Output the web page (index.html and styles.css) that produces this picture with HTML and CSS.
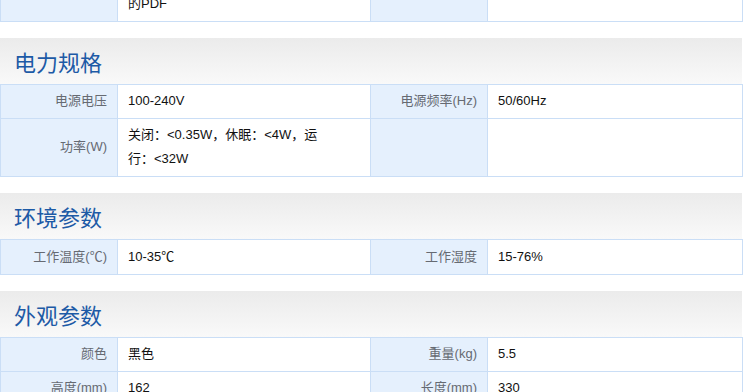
FILE: index.html
```html
<!DOCTYPE html>
<html lang="zh-CN">
<head>
<meta charset="utf-8">
<link rel="stylesheet" href="styles.css">
</head>
<body>
<div class="page">
  <table class="spec first">
    <colgroup><col class="c1"><col class="c2"><col class="c3"><col class="c4"></colgroup>
    <tr class="two">
      <td class="lbl"></td>
      <td class="val">支持扫描文件输出为可检索<br>的PDF</td>
      <td class="lbl"></td>
      <td class="val"></td>
    </tr>
  </table>

  <section class="sec">
    <h2 class="head">电力规格</h2>
    <table class="spec">
      <colgroup><col class="c1"><col class="c2"><col class="c3"><col class="c4"></colgroup>
      <tr>
        <td class="lbl">电源电压</td>
        <td class="val">100-240V</td>
        <td class="lbl">电源频率(Hz)</td>
        <td class="val">50/60Hz</td>
      </tr>
      <tr class="two">
        <td class="lbl">功率(W)</td>
        <td class="val">关闭：&lt;0.35W，休眠：&lt;4W，运<br>行：&lt;32W</td>
        <td class="lbl"></td>
        <td class="val"></td>
      </tr>
    </table>
  </section>

  <section class="sec">
    <h2 class="head">环境参数</h2>
    <table class="spec">
      <colgroup><col class="c1"><col class="c2"><col class="c3"><col class="c4"></colgroup>
      <tr>
        <td class="lbl">工作温度(<span class="cjk">℃</span>)</td>
        <td class="val">10-35<span class="cjk">℃</span></td>
        <td class="lbl">工作湿度</td>
        <td class="val">15-76%</td>
      </tr>
    </table>
  </section>

  <section class="sec">
    <h2 class="head">外观参数</h2>
    <table class="spec">
      <colgroup><col class="c1"><col class="c2"><col class="c3"><col class="c4"></colgroup>
      <tr>
        <td class="lbl">颜色</td>
        <td class="val">黑色</td>
        <td class="lbl">重量(kg)</td>
        <td class="val">5.5</td>
      </tr>
      <tr>
        <td class="lbl">高度(mm)</td>
        <td class="val">162</td>
        <td class="lbl">长度(mm)</td>
        <td class="val">330</td>
      </tr>
    </table>
  </section>
</div>
</body>
</html>
```
FILE: styles.css
```css
html, body {
  margin: 0;
  padding: 0;
  background: #ffffff;
}
body {
  font-family: "Liberation Sans", "Noto Sans CJK SC", sans-serif;
  font-size: 13px;
  color: #000;
  overflow: hidden;
}
.page {
  width: 742px;
  margin-top: -37px;
}
.spec {
  width: 742px;
  border-collapse: collapse;
  table-layout: fixed;
}
.c1 { width: 117px; }
.c2 { width: 253px; }
.c3 { width: 117px; }
.c4 { width: 255px; }
.spec td {
  border: 1px solid #cadef6;
  padding: 4px 10px 5px 10px;
  line-height: 24px;
  height: 24px;
  vertical-align: middle;
}
.spec tr.two td {
  height: 48px;
}
.spec td.lbl {
  background: #e5f0fd;
  color: #666a72;
  text-align: right;
}
.spec td.val {
  background: #ffffff;
  color: #111;
  text-align: left;
}
.cjk {
  font-family: "Noto Sans CJK SC", sans-serif;
}
.sec {
  margin-top: 16px;
}
.head {
  margin: 0;
  height: 46px;
  line-height: 46px;
  padding-left: 14px;
  font-family: "Noto Sans CJK SC", sans-serif;
  font-size: 22px;
  font-weight: normal;
  color: #1d5aa6;
  background: linear-gradient(to bottom, #ebebeb, #f9f9f9);
}
```
